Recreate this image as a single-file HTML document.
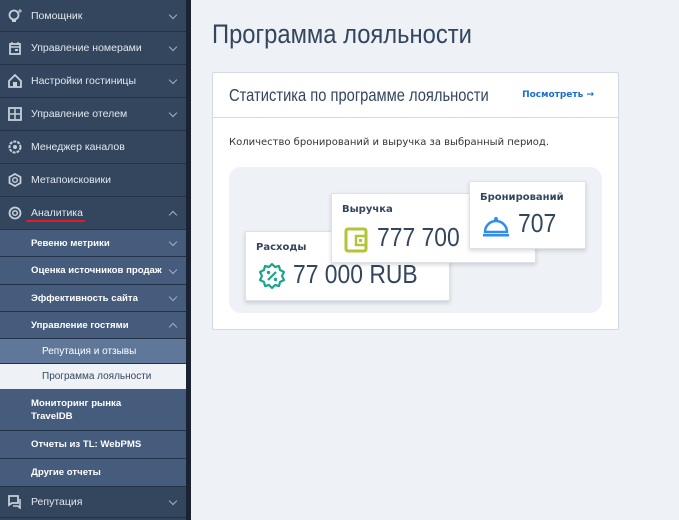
<!DOCTYPE html>
<html><head><meta charset="utf-8"><style>
*{box-sizing:border-box;margin:0;padding:0}
body{width:679px;height:520px;overflow:hidden;background:#eef1f5;font-family:"DejaVu Sans","Liberation Sans",sans-serif;position:relative}
#sb{position:absolute;left:0;top:0;width:186px;height:520px;background:#33465e;font-family:"Liberation Sans",sans-serif}
#strip{position:absolute;left:186px;top:0;width:5px;height:520px;background:#1b2333}
.it{position:absolute;left:0;width:186px;border-bottom:1px solid #243247;color:#e3e8ef;font-size:10.5px;display:flex;align-items:center;padding-left:31px}
.top{background:#33465e}
.sub{background:#455c7c;font-weight:bold;color:#fff;font-size:9.6px}
.ss{background:#5f7799;color:#fff;font-size:10px;padding-left:42px}
.act{background:#eef1f5;color:#33465e;font-size:10px;padding-left:42px}
.ch{position:absolute;right:10px;top:50%;margin-top:-4px;width:6px;height:6px;border-right:1.5px solid #9fb0c6;border-bottom:1.5px solid #9fb0c6;transform:rotate(45deg)}
.up{transform:rotate(-135deg);margin-top:-1px}
.ic{position:absolute;left:8px;top:50%;margin-top:-7px;width:14px;height:14px}
.cd{display:inline-block;transform-origin:0 50%;white-space:nowrap}
h1{position:absolute;left:212px;top:19px;font-family:"Liberation Sans",sans-serif;font-weight:normal;font-size:27px;color:#33465e}
#card{position:absolute;left:212px;top:72px;width:407px;height:258px;background:#fff;border:1px solid #d3dae4;border-radius:2px}
#ch{height:45px;border-bottom:1px solid #d3dae4;position:relative}
#ch .t{position:absolute;left:16px;top:12px;font-family:"Liberation Sans",sans-serif;font-size:17.5px;color:#33465e}
#ch .l{position:absolute;right:24px;top:17px;font-size:9px;font-weight:bold;color:#1a6dd0}
.desc{position:absolute;left:16px;top:64px;font-size:10px;color:#333}
#box{position:absolute;left:16px;top:94px;width:373px;height:146px;background:#eef1f5;border-radius:12px}
.k{position:absolute;background:#fff;border:1px solid #dde2ea;box-shadow:0 2px 4px rgba(0,0,0,.15)}
.k .n{position:absolute;font-size:10px;font-weight:bold;color:#33465e}
.k .v{position:absolute;font-family:"Liberation Sans",sans-serif;font-size:26px;color:#33465e;transform:scaleX(.88);transform-origin:0 50%;white-space:nowrap}
</style></head><body>
<div id="sb">
<div class="it top" style="top:0;height:32px">Помощник<div class="ch"></div>
<svg class="ic" viewBox="0 0 14 14"><circle cx="6" cy="6" r="4.5" fill="none" stroke="#c6d0dc" stroke-width="1.8"/><rect x="4" y="11" width="4" height="2" fill="#c6d0dc"/><path d="M12 0v4M10 2h4" stroke="#c6d0dc"/></svg></div>
<div class="it top" style="top:32px;height:33px">Управление номерами<div class="ch"></div>
<svg class="ic" viewBox="0 0 14 14"><rect x="2" y="3" width="10" height="10" fill="none" stroke="#c6d0dc" stroke-width="1.8"/><path d="M4 1v3M10 1v3M2 6h10" stroke="#c6d0dc" stroke-width="1.5"/><rect x="7" y="8" width="3" height="2" fill="#c6d0dc"/></svg></div>
<div class="it top" style="top:65px;height:33px">Настройки гостиницы<div class="ch"></div>
<svg class="ic" viewBox="0 0 14 14"><path d="M1 7L7 1l6 6v6H1z" fill="none" stroke="#c6d0dc" stroke-width="1.8"/><rect x="5" y="8" width="4" height="5" fill="#c6d0dc"/></svg></div>
<div class="it top" style="top:98px;height:33px">Управление отелем<div class="ch"></div>
<svg class="ic" viewBox="0 0 14 14"><rect x="1" y="1" width="12" height="12" fill="none" stroke="#c6d0dc" stroke-width="1.8"/><path d="M7 2v10M2 7h10" stroke="#c6d0dc" stroke-width="1.5"/></svg></div>
<div class="it top" style="top:131px;height:33px">Менеджер каналов
<svg class="ic" viewBox="0 0 14 14"><circle cx="7" cy="7" r="5.5" fill="none" stroke="#c6d0dc" stroke-width="2" stroke-dasharray="3 1"/><circle cx="7" cy="7" r="2" fill="#c6d0dc"/></svg></div>
<div class="it top" style="top:164px;height:33px">Метапоисковики
<svg class="ic" viewBox="0 0 14 14"><path d="M7 1l5.5 3v6L7 13 1.5 10V4z" fill="none" stroke="#c6d0dc" stroke-width="1.8"/><circle cx="7" cy="7" r="2.3" fill="none" stroke="#c6d0dc" stroke-width="1.4"/></svg></div>
<div class="it top" style="top:197px;height:33px">Аналитика<div class="ch up"></div><div style="position:absolute;left:26px;top:23px;width:59px;height:2px;background:#e21b2a;border-radius:1px"></div>
<svg class="ic" viewBox="0 0 14 14"><circle cx="7" cy="7" r="5.5" fill="none" stroke="#c6d0dc" stroke-width="1.8"/><circle cx="7" cy="7" r="2.3" fill="none" stroke="#c6d0dc" stroke-width="1.5"/></svg></div>
<div class="it sub" style="top:230px;height:27px">Ревеню метрики<div class="ch"></div></div>
<div class="it sub" style="top:257px;height:28px">Оценка источников продаж<div class="ch"></div></div>
<div class="it sub" style="top:285px;height:27px">Эффективность сайта<div class="ch"></div></div>
<div class="it sub" style="top:312px;height:27px">Управление гостями<div class="ch up"></div></div>
<div class="it ss" style="top:339px;height:25px">Репутация и отзывы</div>
<div class="it act" style="top:364px;height:25px;border-bottom:none">Программа лояльности</div>
<div class="it sub" style="top:389px;height:42px;line-height:13px">Мониторинг рынка<br>TravelDB</div>
<div class="it sub" style="top:431px;height:28px">Отчеты из TL: WebPMS</div>
<div class="it sub" style="top:459px;height:28px">Другие отчеты</div>
<div class="it top" style="top:487px;height:31px">Репутация<div class="ch"></div>
<svg class="ic" viewBox="0 0 14 14"><path d="M1 1h9v7H4L1 10z" fill="none" stroke="#c6d0dc" stroke-width="1.8"/><path d="M12 4v9l-2-2H5" fill="none" stroke="#c6d0dc" stroke-width="1.6"/></svg></div>
</div>
<div id="strip"></div>
<h1><span class="cd" style="transform:scaleX(.88)">Программа лояльности</span></h1>
<div id="card">
<div id="ch"><div class="t"><span class="cd" style="transform:scaleX(.84)">Статистика по программе лояльности</span></div><div class="l">Посмотреть →</div></div>
<div class="desc">Количество бронирований и выручка за выбранный период.</div>
<div id="box">
<div class="k" style="left:16px;top:64px;width:205px;height:70px"><div class="n" style="left:10px;top:10px">Расходы</div>
<svg style="position:absolute;left:12px;top:30px" width="28" height="28" viewBox="0 0 28 28"><path d="M14 2l3 3 4-1 1 4 4 2-2 4 2 4-4 2-1 4-4-1-3 3-3-3-4 1-1-4-4-2 2-4-2-4 4-2 1-4 4 1z" fill="none" stroke="#1aa58e" stroke-width="2.2" stroke-linejoin="round"/><path d="M10 18l8-8" stroke="#1aa58e" stroke-width="2.2"/><circle cx="10.5" cy="10.5" r="1.7" fill="#1aa58e"/><circle cx="17.5" cy="17.5" r="1.7" fill="#1aa58e"/></svg>
<div class="v" style="left:47px;top:27px">77 000 RUB</div></div>
<div class="k" style="left:102px;top:26px;width:205px;height:70px"><div class="n" style="left:10px;top:10px">Выручка</div>
<svg style="position:absolute;left:12px;top:33px" width="26" height="26" viewBox="0 0 26 26"><rect x="2" y="2" width="20" height="22" rx="2" fill="none" stroke="#b5c436" stroke-width="3"/><rect x="12" y="9" width="10" height="9" fill="none" stroke="#b5c436" stroke-width="2.5"/><rect x="15" y="12" width="3" height="3" fill="#b5c436"/></svg>
<div class="v" style="left:45px;top:28px">777 700</div></div>
<div class="k" style="left:240px;top:14px;width:117px;height:68px"><div class="n" style="left:10px;top:10px">Бронирований</div>
<svg style="position:absolute;left:12px;top:34px" width="28" height="22" viewBox="0 0 28 22"><circle cx="14" cy="3" r="2" fill="#2d8ef0"/><path d="M3 16a11 11 0 0 1 22 0z" fill="none" stroke="#2d8ef0" stroke-width="2.5"/><rect x="1" y="18" width="26" height="2.5" fill="#2d8ef0"/></svg>
<div class="v" style="left:48px;top:26px">707</div></div>
</div>
</div>
</body></html>
